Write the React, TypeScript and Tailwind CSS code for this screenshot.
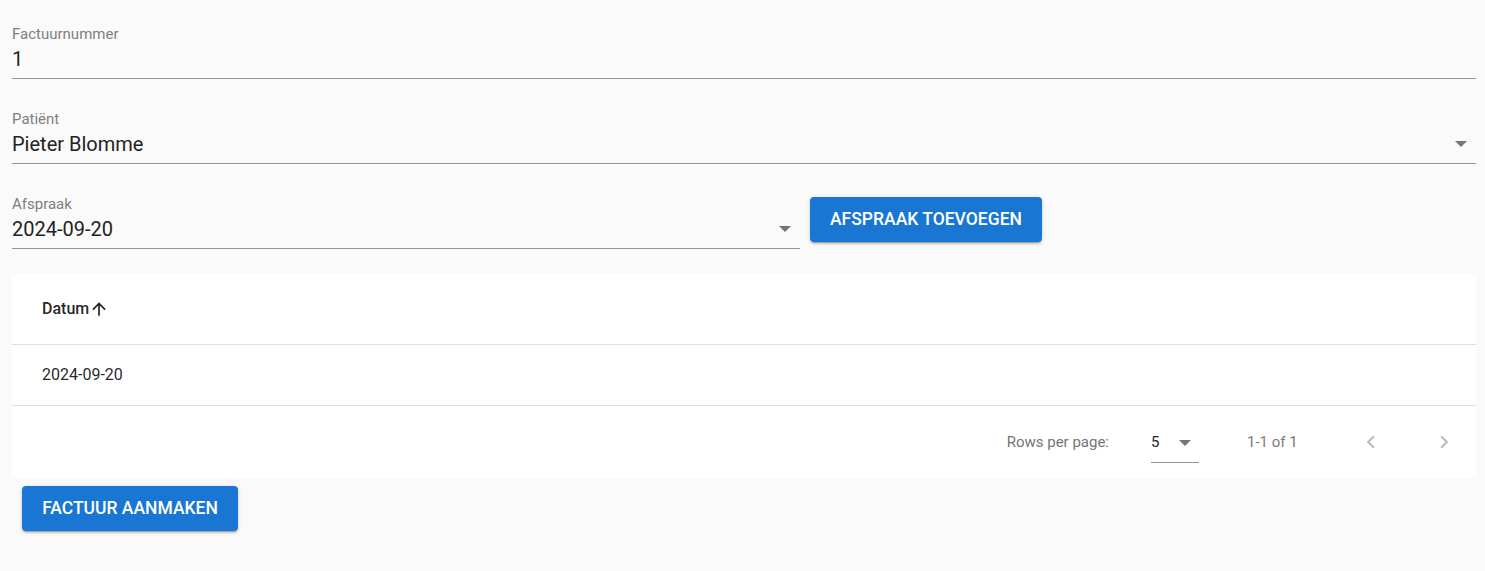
import React from "react";

const font = { fontFamily: "Roboto, 'Noto Sans', Arial, sans-serif" };

function DropArrow({ className = "" }: { className?: string }) {
  return (
    <svg width="12" height="6" viewBox="0 0 12 6" className={className}>
      <polygon points="0,0 12,0 6,6" fill="#757575" />
    </svg>
  );
}

function Field({ label, value, arrow }: { label: string; value: string; arrow?: boolean }) {
  return (
    <div className="relative w-full border-b border-[#949494]">
      <div className="text-[15px] leading-[18px] text-[#7f7f7f]">{label}</div>
      <div className="mt-1 pb-[7px] text-[20px] leading-[24px] text-[#222222]">{value}</div>
      {arrow && <DropArrow className="absolute right-[9px] top-[31px]" />}
    </div>
  );
}

function Button({ children, w }: { children: React.ReactNode; w: string }) {
  return (
    <button
      className={`${w} flex h-[45px] shrink-0 items-center justify-center rounded-[4px] bg-[#1976d2] text-[17.5px] font-medium uppercase tracking-normal text-white shadow-[0px_3px_1px_-2px_rgba(0,0,0,0.2),0px_2px_2px_0px_rgba(0,0,0,0.14),0px_1px_5px_0px_rgba(0,0,0,0.12)]`}
    >
      {children}
    </button>
  );
}

export default function App() {
  return (
    <div className="min-h-screen bg-[#fafafa] pl-3 pr-[9px] pt-[25px]" style={font}>
      <Field label="Factuurnummer" value="1" />
      <div className="mt-[31px]">
        <Field label="Patiënt" value="Pieter Blomme" arrow />
      </div>
      <div className="mt-[31px] flex items-start">
        <div className="w-[788px] shrink-0">
          <Field label="Afspraak" value="2024-09-20" arrow />
        </div>
        <div className="ml-[10px] mt-[2px]">
          <Button w="w-[232px]">Afspraak toevoegen</Button>
        </div>
      </div>

      <div className="mt-[25px] rounded-[4px] bg-white">
        <div className="flex h-[71px] items-center border-b border-[#e0e0e0] pl-[30px]">
          <span className="text-[16px] font-medium leading-[20px] text-[rgba(0,0,0,0.87)]">Datum</span>
          <svg width="20" height="20" viewBox="0 0 24 24" className="shrink-0">
            <path d="M4 12l1.41 1.41L11 7.83V20h2V7.83l5.58 5.59L20 12l-8-8-8 8z" fill="rgba(0,0,0,0.87)" />
          </svg>
        </div>
        <div className="flex h-[61px] items-center border-b border-[#e0e0e0] pl-[30px]">
          <span className="text-[16px] leading-[20px] text-[rgba(0,0,0,0.87)]">2024-09-20</span>
        </div>
        <div className="flex h-[72px] items-start justify-end pr-[8px]">
          <span className="mt-[27px] whitespace-nowrap text-[15px] leading-[18px] text-[#757575]">Rows per page:</span>
          <div className="relative ml-[42px] mt-[27px] w-[48px] border-b border-[#949494] pb-[11px]">
            <span className="block text-[15px] leading-[18px] text-[#222222]">5</span>
            <DropArrow className="absolute right-[8px] top-[7px]" />
          </div>
          <span className="ml-[48px] mt-[27px] w-[50px] whitespace-nowrap text-[15px] leading-[18px] text-[#7a7a7a]">1-1 of 1</span>
          <div className="ml-[50px] flex h-[72px] w-[48px] items-center justify-center">
            <svg width="26" height="26" viewBox="0 0 24 24">
              <path d="M15.41 7.41L14 6l-6 6 6 6 1.41-1.41L10.83 12z" fill="#bdbdbd" />
            </svg>
          </div>
          <div className="ml-[25px] flex h-[72px] w-[48px] items-center justify-center">
            <svg width="26" height="26" viewBox="0 0 24 24">
              <path d="M8.59 16.59L10 18l6-6-6-6-1.41 1.41L13.17 12z" fill="#bdbdbd" />
            </svg>
          </div>
        </div>
      </div>

      <div className="ml-[10px] mt-[8px]">
        <Button w="w-[216px]">Factuur aanmaken</Button>
      </div>
    </div>
  );
}
